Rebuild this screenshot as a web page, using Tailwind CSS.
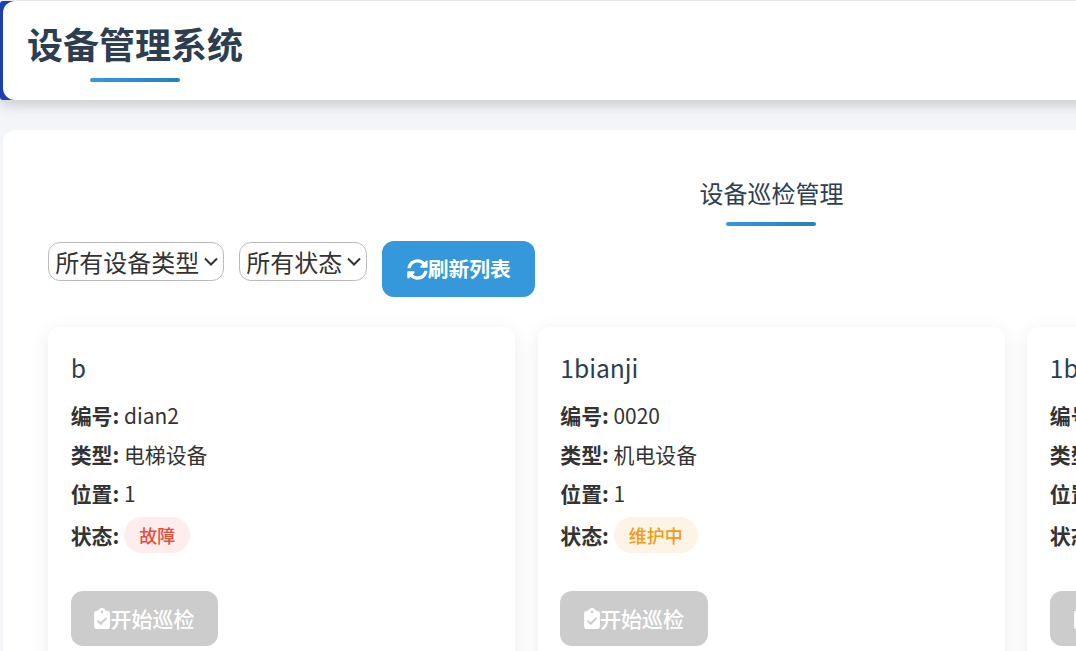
<!DOCTYPE html>
<html lang="zh-CN">
<head>
<meta charset="utf-8">
<script src="https://cdn.jsdelivr.net/npm/@tailwindcss/browser@4"></script>
<title>设备管理系统</title>
</head>
<body class="h-[651px] overflow-hidden bg-[#f4f5f9] font-['Noto_Sans_CJK_SC','Noto_Sans',sans-serif] text-[#333]">
<div class="w-[1540px] pt-px">
  <header class="h-[99px] rounded-[3px] bg-[#1e40af] pl-[3px] shadow-[0_4px_15px_rgba(0,0,0,0.2)]">
    <div class="h-full rounded-xl bg-white pl-6 pt-[15px]">
      <div class="inline-block">
        <h1 class="text-[36px] leading-[54px] font-bold text-[#2c3e50]">设备管理系统</h1>
        <div class="mx-auto mt-2 h-1 w-[90px] rounded-sm bg-gradient-to-r from-[#3498db] to-[#2980b9]"></div>
      </div>
    </div>
  </header>
  <main class="mt-[30px] ml-[3.2px] h-[600px] w-[1536.6px] rounded-xl bg-white px-[45.1px] pt-[45px]">
    <div class="flex flex-col items-center">
      <h2 class="text-[24px] leading-9 font-normal text-[#2c3e50]">设备巡检管理</h2>
      <div class="mt-[11px] h-1 w-[90px] rounded-sm bg-gradient-to-r from-[#3498db] to-[#2980b9]"></div>
    </div>
    <div class="mt-[15px] flex items-start gap-[15px]">
      <div class="relative mt-px">
        <select class="block h-[39px] w-[176px] appearance-none rounded-xl border border-[#bbb] bg-white pl-[6px] text-[24px] text-[#333]"><option>所有设备类型</option></select>
        <svg class="pointer-events-none absolute top-[15px] right-[6px] h-[9px] w-[14px]" viewBox="0 0 14 9" fill="none" stroke="#333" stroke-width="2"><path d="M1 1.5 7 7.5 13 1.5"/></svg>
      </div>
      <div class="relative mt-px">
        <select class="block h-[39px] w-[128px] appearance-none rounded-xl border border-[#bbb] bg-white pl-[6px] text-[24px] text-[#333]"><option>所有状态</option></select>
        <svg class="pointer-events-none absolute top-[15px] right-[6px] h-[9px] w-[14px]" viewBox="0 0 14 9" fill="none" stroke="#333" stroke-width="2"><path d="M1 1.5 7 7.5 13 1.5"/></svg>
      </div>
      <button class="flex h-14 w-[153px] items-center justify-center rounded-xl bg-[#3498db] text-[20.8px] font-bold text-white">
        <svg class="h-[21px] w-[21px] fill-white" viewBox="0 0 512 512"><path d="M370.72 133.28C339.458 104.008 298.888 87.962 255.848 88c-77.458.068-144.328 53.178-162.791 126.85-1.344 5.363-6.122 9.15-11.651 9.15H24.103c-7.498 0-13.194-6.807-11.807-14.176C33.933 94.924 134.813 8 256 8c66.448 0 126.791 26.136 171.315 68.685L463.03 40.97C478.149 25.851 504 36.559 504 57.941V192c0 13.255-10.745 24-24 24H345.941c-21.382 0-32.09-25.851-16.971-40.971l41.75-41.749zM32 296h134.059c21.382 0 32.09 25.851 16.971 40.971l-41.75 41.75c31.262 29.273 71.835 45.319 114.876 45.28 77.418-.07 144.315-53.144 162.787-126.849 1.344-5.363 6.122-9.15 11.651-9.15h57.304c7.498 0 13.194 6.807 11.807 14.176C478.067 417.076 377.187 504 256 504c-66.448 0-126.791-26.136-171.315-68.685L48.97 471.03C33.851 486.149 8 475.441 8 454.059V320c0-13.255 10.745-24 24-24z"/></svg>
        <span>刷新列表</span>
      </button>
    </div>
    <div class="mt-[30px] grid grid-cols-3 gap-[22.4px]">
      <article class="h-[400px] rounded-xl bg-white px-[22.4px] pt-[22px] shadow-[0_4px_20px_rgba(0,0,0,0.08)]">
        <h3 class="text-[24.64px] leading-9 font-normal text-[#2c3e50]">b</h3>
        <p class="mt-[15px] text-[20.9px] leading-[31px]"><b class="font-bold">编号:</b> dian2</p>
        <p class="mt-2 text-[20.9px] leading-[31px]"><b class="font-bold">类型:</b> 电梯设备</p>
        <p class="mt-2 text-[20.9px] leading-[31px]"><b class="font-bold">位置:</b> 1</p>
        <p class="mt-2 flex items-center gap-[5px] text-[20.9px] leading-[36px]"><b class="font-bold">状态:</b><span class="rounded-full bg-[#fdedec] px-[15px] text-[18px] leading-[36px] font-medium text-[#e74c3c]">故障</span></p>
        <button class="mt-[38px] flex h-[55px] w-[147.5px] items-center justify-center rounded-xl bg-[#ccc] text-[21px] font-medium text-white">
          <svg class="h-[21px] w-[16px] fill-white" viewBox="0 0 384 512"><path d="M192 0c-41.8 0-77.4 26.7-90.5 64H64C28.7 64 0 92.7 0 128V448c0 35.3 28.7 64 64 64H320c35.3 0 64-28.7 64-64V128c0-35.3-28.7-64-64-64H282.5C269.4 26.7 233.8 0 192 0zm0 64a32 32 0 1 1 0 64 32 32 0 1 1 0-64zM305 273L177 401c-9.4 9.4-24.6 9.4-33.9 0L79 337c-9.4-9.4-9.4-24.6 0-33.9s24.6-9.4 33.9 0l47 47L271 239c9.4-9.4 24.6-9.4 33.9 0s9.4 24.6 0 33.9z"/></svg>
          <span>开始巡检</span>
        </button>
      </article>
      <article class="h-[400px] rounded-xl bg-white px-[22.4px] pt-[22px] shadow-[0_4px_20px_rgba(0,0,0,0.08)]">
        <h3 class="text-[24.64px] leading-9 font-normal text-[#2c3e50]">1bianji</h3>
        <p class="mt-[15px] text-[20.9px] leading-[31px]"><b class="font-bold">编号:</b> 0020</p>
        <p class="mt-2 text-[20.9px] leading-[31px]"><b class="font-bold">类型:</b> 机电设备</p>
        <p class="mt-2 text-[20.9px] leading-[31px]"><b class="font-bold">位置:</b> 1</p>
        <p class="mt-2 flex items-center gap-[5px] text-[20.9px] leading-[36px]"><b class="font-bold">状态:</b><span class="rounded-full bg-[#fef3e7] px-[15px] text-[18px] leading-[36px] font-medium text-[#f39c12]">维护中</span></p>
        <button class="mt-[38px] flex h-[55px] w-[147.5px] items-center justify-center rounded-xl bg-[#ccc] text-[21px] font-medium text-white">
          <svg class="h-[21px] w-[16px] fill-white" viewBox="0 0 384 512"><path d="M192 0c-41.8 0-77.4 26.7-90.5 64H64C28.7 64 0 92.7 0 128V448c0 35.3 28.7 64 64 64H320c35.3 0 64-28.7 64-64V128c0-35.3-28.7-64-64-64H282.5C269.4 26.7 233.8 0 192 0zm0 64a32 32 0 1 1 0 64 32 32 0 1 1 0-64zM305 273L177 401c-9.4 9.4-24.6 9.4-33.9 0L79 337c-9.4-9.4-9.4-24.6 0-33.9s24.6-9.4 33.9 0l47 47L271 239c9.4-9.4 24.6-9.4 33.9 0s9.4 24.6 0 33.9z"/></svg>
          <span>开始巡检</span>
        </button>
      </article>
      <article class="h-[400px] rounded-xl bg-white px-[22.4px] pt-[22px] shadow-[0_4px_20px_rgba(0,0,0,0.08)]">
        <h3 class="text-[24.64px] leading-9 font-normal text-[#2c3e50]">1bianji</h3>
        <p class="mt-[15px] text-[20.9px] leading-[31px]"><b class="font-bold">编号:</b> 0020</p>
        <p class="mt-2 text-[20.9px] leading-[31px]"><b class="font-bold">类型:</b> 机电设备</p>
        <p class="mt-2 text-[20.9px] leading-[31px]"><b class="font-bold">位置:</b> 1</p>
        <p class="mt-2 flex items-center gap-[5px] text-[20.9px] leading-[36px]"><b class="font-bold">状态:</b><span class="rounded-full bg-[#fef3e7] px-[15px] text-[18px] leading-[36px] font-medium text-[#f39c12]">维护中</span></p>
        <button class="mt-[38px] flex h-[55px] w-[147.5px] items-center justify-center rounded-xl bg-[#ccc] text-[21px] font-medium text-white">
          <svg class="h-[21px] w-[16px] fill-white" viewBox="0 0 384 512"><path d="M192 0c-41.8 0-77.4 26.7-90.5 64H64C28.7 64 0 92.7 0 128V448c0 35.3 28.7 64 64 64H320c35.3 0 64-28.7 64-64V128c0-35.3-28.7-64-64-64H282.5C269.4 26.7 233.8 0 192 0zm0 64a32 32 0 1 1 0 64 32 32 0 1 1 0-64zM305 273L177 401c-9.4 9.4-24.6 9.4-33.9 0L79 337c-9.4-9.4-9.4-24.6 0-33.9s24.6-9.4 33.9 0l47 47L271 239c9.4-9.4 24.6-9.4 33.9 0s9.4 24.6 0 33.9z"/></svg>
          <span>开始巡检</span>
        </button>
      </article>
    </div>
  </main>
</div>
</body>
</html>
